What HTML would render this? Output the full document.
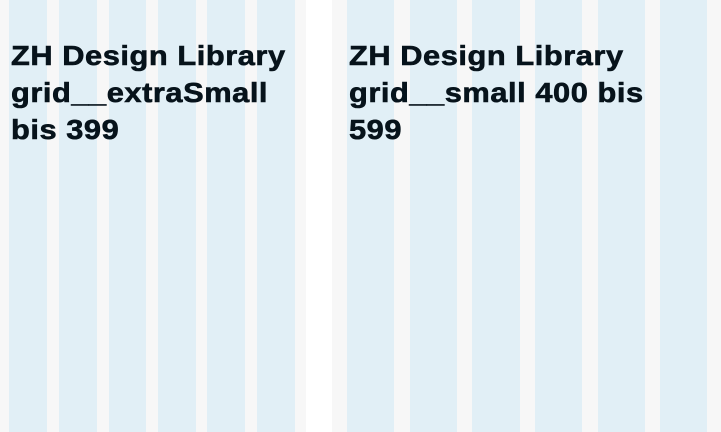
<!DOCTYPE html>
<html><head><style>
body{margin:0;width:721px;height:432px;overflow:hidden;background:#fff;position:relative;font-family:"Liberation Sans",sans-serif}
.p{position:absolute;top:0;height:432px;background:#f7f7f7}
.c{position:absolute;top:0;height:432px;background:#e1eff6}
.t{position:absolute;top:37px;font-weight:bold;font-size:28px;line-height:37px;color:#07131b;letter-spacing:0.5px;white-space:nowrap;transform:scaleX(1.1);transform-origin:0 0;-webkit-text-stroke:0.6px #07131b}
</style></head><body>
<div class="p" style="left:0;width:306px"></div>
<div class="c" style="left:9px;width:38px"></div>
<div class="c" style="left:59px;width:38px"></div>
<div class="c" style="left:109px;width:37px"></div>
<div class="c" style="left:158px;width:38px"></div>
<div class="c" style="left:207px;width:38px"></div>
<div class="c" style="left:257px;width:38px"></div>
<div class="p" style="left:332px;width:389px"></div>
<div class="c" style="left:347px;width:47px"></div>
<div class="c" style="left:410px;width:47px"></div>
<div class="c" style="left:472px;width:48px"></div>
<div class="c" style="left:535px;width:47px"></div>
<div class="c" style="left:598px;width:47px"></div>
<div class="c" style="left:660px;width:47px"></div>
<div class="t" style="left:11px">ZH Design Library<br>grid__extraSmall<br>bis 399</div>
<div class="t" style="left:349px">ZH Design Library<br>grid__small 400 bis<br>599</div>
</body></html>
